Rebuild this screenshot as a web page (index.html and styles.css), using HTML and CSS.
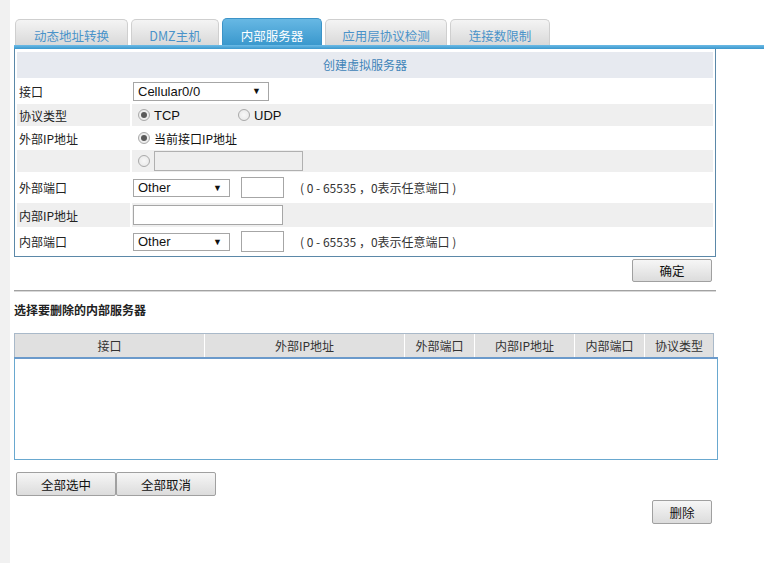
FILE: index.html
```html
<!DOCTYPE html>
<html>
<head>
<meta charset="utf-8">
<link rel="stylesheet" href="styles.css">
</head>
<body>
<div class="page">
  <div class="strip"></div>
  <div class="main">
    <div class="tabs">
      <div class="tab w1">动态地址转换</div>
      <div class="tab w2">DMZ主机</div>
      <div class="tab active w3">内部服务器</div>
      <div class="tab w4">应用层协议检测</div>
      <div class="tab w5">连接数限制</div>
    </div>
    <div class="bar"></div>
    <div class="content">
      <div class="form">
        <div class="fhead">创建虚拟服务器</div>

        <div class="lab r1">接口</div>
        <div class="val r1 white"><div class="select s-wide"><span>Cellular0/0</span><span class="arr">▼</span></div></div>

        <div class="lab r2 gray">协议类型</div>
        <div class="val r2 gray"><span class="radio on"></span><span class="rt">TCP</span><span class="radio udp"></span><span class="rt">UDP</span></div>

        <div class="lab r3">外部IP地址</div>
        <div class="val r3"><span class="radio on"></span><span class="rt cn">当前接口IP地址</span></div>

        <div class="lab r4 gray"></div>
        <div class="val r4 gray"><span class="radio"></span><span class="input dis"></span></div>

        <div class="lab r5">外部端口</div>
        <div class="val r5"><div class="select s-short"><span>Other</span><span class="arr">▼</span></div><span class="input small"></span><span class="hint">( 0 - 65535 ，0表示任意端口 )</span></div>

        <div class="lab r6 gray">内部IP地址</div>
        <div class="val r6 gray"><span class="input ip"></span></div>

        <div class="lab r7">内部端口</div>
        <div class="val r7"><div class="select s-short"><span>Other</span><span class="arr">▼</span></div><span class="input small"></span><span class="hint">( 0 - 65535 ，0表示任意端口 )</span></div>
      </div>

      <div class="okrow"><button class="btn ok">确定</button></div>
      <div class="sep"></div>
      <div class="title">选择要删除的内部服务器</div>

      <div class="thead">
        <div class="th c1">接口</div>
        <div class="th c2">外部IP地址</div>
        <div class="th c3">外部端口</div>
        <div class="th c4">内部IP地址</div>
        <div class="th c5">内部端口</div>
        <div class="th c6">协议类型</div>
      </div>
      <div class="list"></div>

      <div class="selrow">
        <button class="btn sel">全部选中</button><button class="btn sel">全部取消</button>
      </div>
      <div class="delrow"><button class="btn del">删除</button></div>
    </div>
  </div>
</div>
</body>
</html>
```

FILE: styles.css
```css
html, body {
  margin: 0;
  padding: 0;
  background: #ffffff;
}
body {
  font-family: "Liberation Sans", "Noto Sans CJK SC", sans-serif;
  font-size: 12px;
  color: #222;
}
.page {
  display: flex;
  min-height: 563px;
}
.strip {
  width: 10px;
  background: #f1f1f1;
  flex: none;
}
.main {
  flex: 1;
  padding-left: 4px;
  padding-top: 18px;
}
.tabs {
  display: flex;
  align-items: flex-end;
  height: 27px;
  padding-left: 1px;
}
.tab {
  height: 26px;
  box-sizing: border-box;
  margin-right: 3px;
  border: 1px solid #cfcfcf;
  border-bottom: none;
  border-radius: 5px 5px 0 0;
  background: linear-gradient(#f4f4f4, #d9d9d9);
  color: #4a93c9;
  font-family: "Noto Sans CJK SC", sans-serif;
  font-size: 12.5px;
  text-align: center;
  padding-top: 7px;
  line-height: 18px;
}
.tab.active {
  height: 27px;
  padding-top: 8px;
  border-color: #3c93c7;
  background: linear-gradient(#67b8e4, #3a98cd);
  color: #ffffff;
}
.w1 { width: 113px; }
.w2 { width: 88px; }
.w3 { width: 100px; }
.w4 { width: 122px; }
.w5 { width: 100px; }
.bar {
  height: 4px;
  background: linear-gradient(#6cbbe6, #3b97cc);
}
.content {
  width: 702px;
}
.form {
  display: grid;
  grid-template-columns: 113px 1fr;
  gap: 2px;
  padding: 2px;
  border: 1px solid #5b88a8;
  border-top: none;
  padding-top: 3px;
}
.fhead {
  grid-column: 1 / 3;
  height: 26px;
  line-height: 26px;
  background: #e7eaf0;
  color: #3f84b8;
  text-align: center;
  font-family: "Noto Sans CJK SC", sans-serif;
}
.lab {
  padding-left: 2px;
  display: flex;
  align-items: center;
  font-family: "Noto Sans CJK SC", sans-serif;
  color: #222;
}
.val {
  display: flex;
  align-items: center;
}
.gray { background: #efefef; }
.r1 { height: 22px; }
.r2 { height: 22px; }
.r3 { height: 20px; }
.r4 { height: 22px; }
.r5 { height: 27px; }
.r6 { height: 24px; }
.r7 { height: 25px; }
.select {
  box-sizing: border-box;
  height: 19px;
  margin-left: 1px;
  border: 1px solid #a6a6a6;
  background: #fff;
  display: flex;
  align-items: center;
  justify-content: space-between;
  padding: 0 7px 0 4px;
  font-size: 13px;
  color: #111;
}
.arr {
  font-size: 9px;
  color: #111;
}
.s-wide { width: 136px; }
.s-short { width: 97px; height: 18px; }
.radio {
  box-sizing: border-box;
  width: 12px;
  height: 12px;
  border-radius: 50%;
  border: 1px solid #a9a9a9;
  background: radial-gradient(circle, #f8f8f8 0, #e6e6e6 100%);
  margin-left: 6px;
  position: relative;
  flex: none;
}
.radio.on::after {
  content: "";
  position: absolute;
  left: 2px;
  top: 2px;
  width: 6px;
  height: 6px;
  border-radius: 50%;
  background: #5a5a5a;
}
.radio.udp { margin-left: 58px; }
.rt {
  margin-left: 4px;
  font-size: 13px;
  color: #111;
}
.rt.cn {
  font-size: 12px;
  font-family: "Noto Sans CJK SC", sans-serif;
}
.input {
  box-sizing: border-box;
  display: inline-block;
  border: 1px solid #a6a6a6;
  background: #fff;
}
.dis {
  width: 149px;
  height: 20px;
  margin-left: 4px;
  background: #eeeeee;
  border-color: #b0b0b0;
}
.small {
  width: 43px;
  height: 21px;
  margin-left: 11px;
}
.ip {
  width: 150px;
  height: 20px;
  margin-left: 1px;
}
.hint {
  margin-left: 16px;
  font-family: "Noto Sans CJK SC", sans-serif;
  color: #333;
}
.okrow {
  display: flex;
  justify-content: flex-end;
  padding-right: 4px;
  margin-top: 2px;
}
.btn {
  box-sizing: border-box;
  border: 1px solid #a0a0a0;
  border-radius: 2px;
  background: linear-gradient(#f6f6f6, #dcdcdc);
  font-family: "Noto Sans CJK SC", sans-serif;
  font-size: 12.5px;
  color: #111;
  padding: 0;
  margin: 0;
}
.ok {
  width: 80px;
  height: 23px;
}
.sep {
  margin-top: 8px;
  height: 1px;
  background: #a2a2a2;
  border-bottom: 1px solid #d8d8d8;
}
.title {
  margin-top: 9px;
  height: 18px;
  line-height: 18px;
  font-family: "Noto Sans CJK SC", sans-serif;
  font-weight: bold;
  color: #222;
}
.thead {
  margin-top: 14px;
  display: flex;
  width: 700px;
  height: 24px;
  box-sizing: border-box;
  border: 1px solid #a9b9c9;
  border-bottom: none;
  background: #e0e0e0;
}
.th {
  box-sizing: border-box;
  text-align: center;
  line-height: 23px;
  font-family: "Noto Sans CJK SC", sans-serif;
  color: #333;
  border-right: 1px solid #ffffff;
}
.th.c6 { border-right: none; }
.c1 { width: 190px; }
.c2 { width: 200px; }
.c3 { width: 70px; }
.c4 { width: 100px; }
.c5 { width: 70px; }
.c6 { flex: 1; }
.list {
  width: 704px;
  height: 103px;
  box-sizing: border-box;
  border: 1px solid #69a8cf;
  border-top: 2px solid #6b9acb;
}
.selrow {
  display: flex;
  margin-top: 12px;
  padding-left: 2px;
}
.sel {
  width: 100px;
  height: 24px;
}
.delrow {
  display: flex;
  justify-content: flex-end;
  padding-right: 4px;
  margin-top: 4px;
}
.del {
  width: 60px;
  height: 24px;
}
```
